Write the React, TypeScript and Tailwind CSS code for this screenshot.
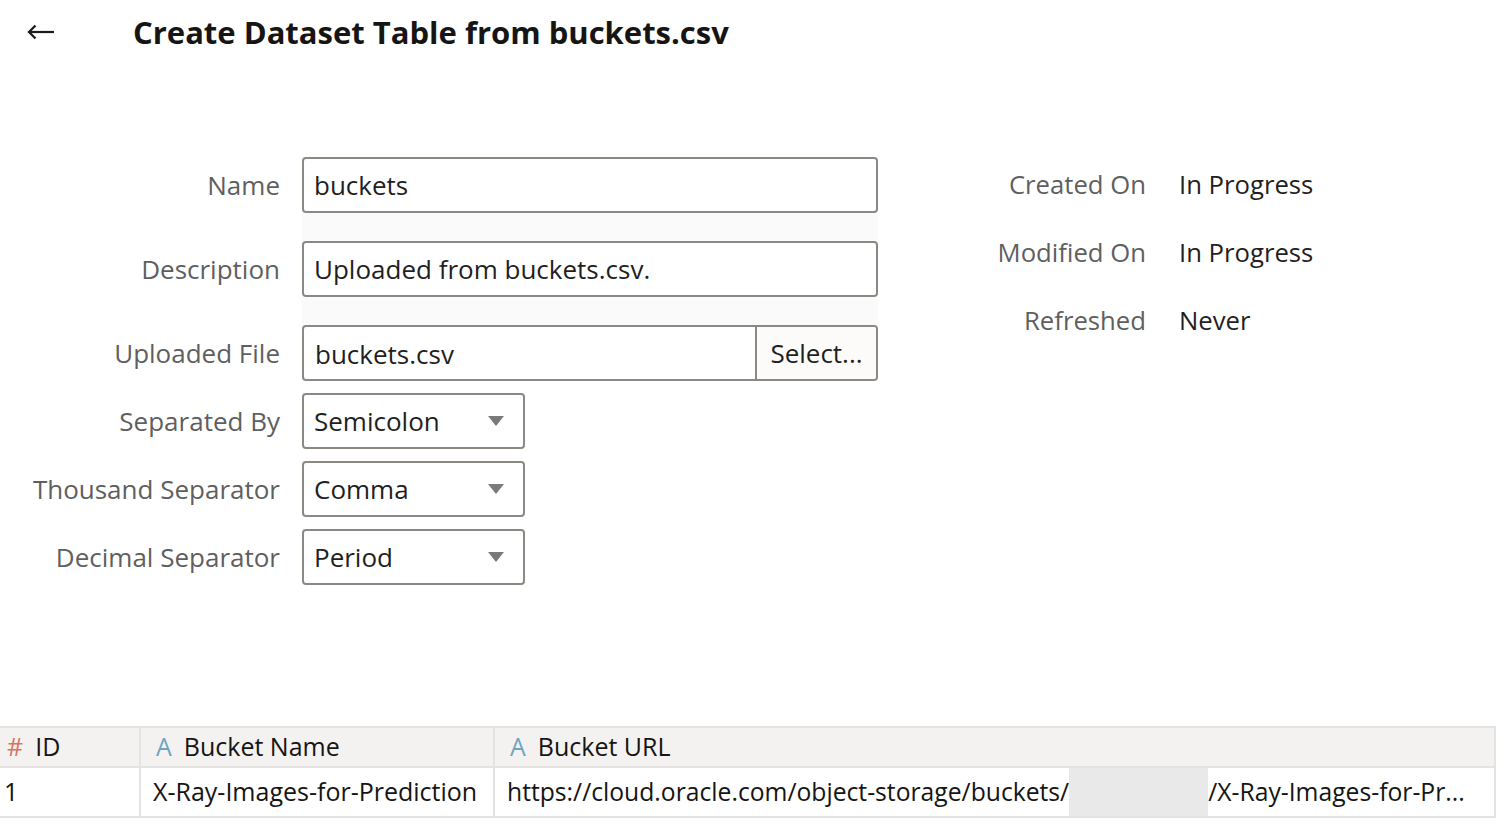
import React from "react";

const font = { fontFamily: '"Open Sans", "Noto Sans", sans-serif' };

function Caret() {
  return (
    <svg width="18" height="12" viewBox="0 0 18 12" className="shrink-0">
      <path d="M1 1 L17 1 L9 11 Z" fill="#7a7a7a" />
    </svg>
  );
}

function SelectBox({ value }: { value: string }) {
  return (
    <div className="flex items-center justify-between w-[223px] h-[56px] border-2 border-[#8c8985] rounded-[4px] pl-[10px] pr-[18px] bg-white">
      <span className="text-[26px] text-[#1f1f1f]">{value}</span>
      <Caret />
    </div>
  );
}

function Row({ label, children, className = "" }: { label: string; children: React.ReactNode; className?: string }) {
  return (
    <div className={`flex items-center ${className}`}>
      <div className="w-[302px] text-right text-[26px] text-[#5f5f5f] pr-[22px] leading-none">{label}</div>
      {children}
    </div>
  );
}

function Band() {
  return (
    <div className="flex">
      <div className="w-[302px]" />
      <div className="w-[576px] h-[28px] bg-[#fafafa]" />
    </div>
  );
}

export default function App() {
  const meta = [
    { label: "Created On", value: "In Progress" },
    { label: "Modified On", value: "In Progress" },
    { label: "Refreshed", value: "Never" },
  ];

  const inputCls =
    "w-[576px] h-[56px] border-2 border-[#8c8985] rounded-[4px] flex items-center px-[10px] bg-white text-[26px] text-[#1f1f1f]";

  return (
    <div className="w-[1504px] h-[828px] bg-white flex flex-col overflow-hidden" style={font}>
      {/* Header */}
      <div className="flex items-center h-[64px]">
        <div className="w-[133px] pl-[27px] flex items-center">
          <svg width="28" height="16" viewBox="0 0 28 16">
            <path d="M2 8 H27" stroke="#1a1a1a" strokeWidth="2.2" />
            <path d="M8.5 1.5 L2 8 L8.5 14.5" stroke="#1a1a1a" strokeWidth="2.2" fill="none" />
          </svg>
        </div>
        <h1 className="text-[31px] font-bold text-[#161513] leading-none">
          Create Dataset Table from buckets.csv
        </h1>
      </div>

      {/* Form + meta */}
      <div className="flex pt-[93px] h-[662px]">
        <div className="flex flex-col">
          <Row label="Name">
            <div className={inputCls}>buckets</div>
          </Row>
          <Band />
          <Row label="Description">
            <div className={inputCls}>Uploaded from buckets.csv.</div>
          </Row>
          <Band />
          <Row label="Uploaded File">
            <div className="w-[576px] h-[56px] border-2 border-[#8c8985] rounded-[4px] flex bg-white text-[26px] text-[#1f1f1f]">
              <div className="flex-1 flex items-center px-[11px] pt-[2px]">buckets.csv</div>
              <div className="w-[121px] border-l-2 border-[#8c8985] bg-[#fcfbfa] flex items-center justify-center rounded-r-[3px]">
                Select...
              </div>
            </div>
          </Row>
          <Row label="Separated By" className="mt-[12px]">
            <SelectBox value="Semicolon" />
          </Row>
          <Row label="Thousand Separator" className="mt-[12px]">
            <SelectBox value="Comma" />
          </Row>
          <Row label="Decimal Separator" className="mt-[12px]">
            <SelectBox value="Period" />
          </Row>
        </div>

        <div className="ml-[82px] flex flex-col gap-[39px] pt-[14px]">
          {meta.map((m) => (
            <div key={m.label} className="flex items-center h-[29px] text-[25.7px]">
              <div className="w-[186px] text-right text-[#5f5f5f]">{m.label}</div>
              <div className="pl-[33px] text-[#1f1f1f]">{m.value}</div>
            </div>
          ))}
        </div>
      </div>

      {/* Table */}
      <div className="w-[1496px] border-t-2 border-r-2 border-[#e4e3e2] text-[25px] text-[#161513]">
        <div className="flex h-[40px] bg-[#f3f2f1] border-b-2 border-[#e4e3e2]">
          <div className="w-[141px] border-r-2 border-[#e4e3e2] flex items-center pl-[7px] gap-[12px]">
            <span className="text-[#d9735f]">#</span>
            <span>ID</span>
          </div>
          <div className="w-[354px] border-r-2 border-[#e4e3e2] flex items-center pl-[15px] gap-[12px]">
            <span className="text-[#6ea4bf]">A</span>
            <span>Bucket Name</span>
          </div>
          <div className="flex-1 flex items-center pl-[15px] gap-[12px]">
            <span className="text-[#6ea4bf]">A</span>
            <span>Bucket URL</span>
          </div>
        </div>
        <div className="flex h-[50px] border-b-2 border-[#e4e3e2]">
          <div className="w-[141px] border-r-2 border-[#e4e3e2] flex items-center pl-[4px]">1</div>
          <div className="w-[354px] border-r-2 border-[#e4e3e2] flex items-center pl-[12px] whitespace-nowrap">
            X-Ray-Images-for-Prediction
          </div>
          <div className="flex-1 flex items-stretch pl-[12px] whitespace-nowrap overflow-hidden text-[24.7px]">
            <span className="flex items-center">https://cloud.oracle.com/object-storage/buckets/</span>
            <span className="w-[139px] bg-[#e9e9e9] shrink-0" />
            <span className="flex items-center">/X-Ray-Images-for-Pr...</span>
          </div>
        </div>
      </div>
    </div>
  );
}
